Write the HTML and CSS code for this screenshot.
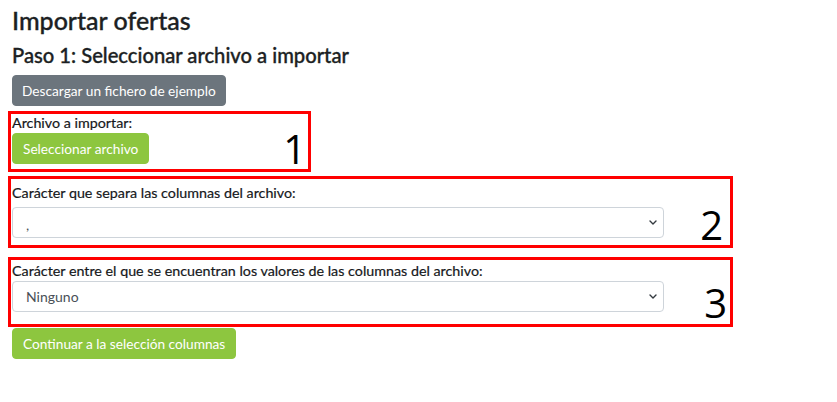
FILE: index.html
```html
<!DOCTYPE html>
<html lang="es">
<head>
<meta charset="utf-8">
<title>Importar ofertas</title>
<link rel="stylesheet" href="styles.css">
</head>
<body>
<div class="page">
  <h1 class="title">Importar ofertas</h1>
  <h2 class="subtitle">Paso 1: Seleccionar archivo a importar</h2>
  <button class="btn btn-gray" type="button">Descargar un fichero de ejemplo</button>

  <div class="mark mark-1">
    <div class="field">
      <label class="label">Archivo a importar:</label>
      <button class="btn btn-green" type="button">Seleccionar archivo</button>
    </div>
    <span class="num num-1">1</span>
  </div>

  <div class="mark mark-2">
    <div class="field">
      <label class="label">Carácter que separa las columnas del archivo:</label>
      <div class="select"><span class="select-text select-comma">,</span><svg class="chev" viewBox="0 0 8 5" width="8" height="5"><path d="M1 1 L4 4 L7 1" fill="none" stroke="#343a40" stroke-width="1.4" stroke-linecap="round" stroke-linejoin="round"/></svg></div>
    </div>
    <span class="num num-2">2</span>
  </div>

  <div class="mark mark-3">
    <div class="field">
      <label class="label">Carácter entre el que se encuentran los valores de las columnas del archivo:</label>
      <div class="select"><span class="select-text">Ninguno</span><svg class="chev" viewBox="0 0 8 5" width="8" height="5"><path d="M1 1 L4 4 L7 1" fill="none" stroke="#343a40" stroke-width="1.4" stroke-linecap="round" stroke-linejoin="round"/></svg></div>
    </div>
    <span class="num num-3">3</span>
  </div>

  <button class="btn btn-green btn-continue" type="button">Continuar a la selección columnas</button>
</div>
</body>
</html>
```
FILE: styles.css
```css
* { box-sizing: border-box; }
html, body { margin: 0; padding: 0; background: #fff; }
body {
  font-family: Lato, "Open Sans", sans-serif;
  font-size: 14px;
  color: #212529;
}
.page {
  padding: 6px 12px 0 12px;
  display: flex;
  flex-direction: column;
  align-items: flex-start;
}
.title {
  margin: 0;
  font-size: 25px;
  font-weight: 500;
  line-height: 29px;
  color: #1c1f23;
  -webkit-text-stroke: 0.35px #1c1f23;
}
.subtitle {
  margin: 8px 0 0 0;
  font-size: 20.2px;
  font-weight: 500;
  line-height: 24px;
  color: #1c1f23;
  -webkit-text-stroke: 0.35px #1c1f23;
}
.btn {
  font-family: Lato, "Open Sans", sans-serif;
  font-size: 13.7px;
  line-height: 19px;
  padding: 5px 9px;
  border: 1px solid transparent;
  border-radius: 4px;
  color: #fff;
  cursor: pointer;
}
.btn-gray {
  margin-top: 8px;
  background: #6c757d;
  border-color: #6c757d;
}
.btn-green {
  padding: 5px 10px;
  background: #8dc63f;
  border-color: #8dc63f;
}
.mark {
  border: 3px solid #ff0000;
  margin-left: -4px;
  padding-left: 1px;
  display: flex;
  align-items: flex-end;
}
.mark-1 {
  margin-top: 5px;
  width: 303px;
  height: 61px;
  padding-top: 0;
}
.mark-2 {
  margin-top: 4px;
  width: 725px;
  height: 72px;
  padding-top: 5px;
}
.mark-3 {
  margin-top: 9px;
  width: 725px;
  height: 70px;
  padding-top: 2px;
}
.field {
  display: flex;
  flex-direction: column;
  align-items: flex-start;
  align-self: flex-start;
}
.label {
  display: block;
  font-size: 14.3px;
  line-height: 17px;
  margin-bottom: 2px;
  color: #16181b;
  -webkit-text-stroke: 0.2px #16181b;
}
.mark-2 .label { margin-bottom: 6px; }
.mark-3 .label { margin-bottom: 2px; }
.select {
  width: 652px;
  height: 31px;
  border: 1px solid #ced4da;
  border-radius: 4px;
  display: flex;
  align-items: center;
  justify-content: space-between;
  padding: 0 6px 0 13px;
  color: #495057;
}
.select-comma { padding-top: 4px; }
.num {
  font-family: "Open Sans", "DejaVu Sans", sans-serif;
  font-size: 40px;
  line-height: 40px;
  color: #000;
  margin-left: auto;
}
.num-1 { margin-right: 2px; margin-bottom: 0; }
.num-2 { margin-right: 7px; margin-bottom: 0; }
.num-3 { margin-right: 3px; margin-bottom: 1px; }
.btn-continue { margin-top: 1px; }
```
